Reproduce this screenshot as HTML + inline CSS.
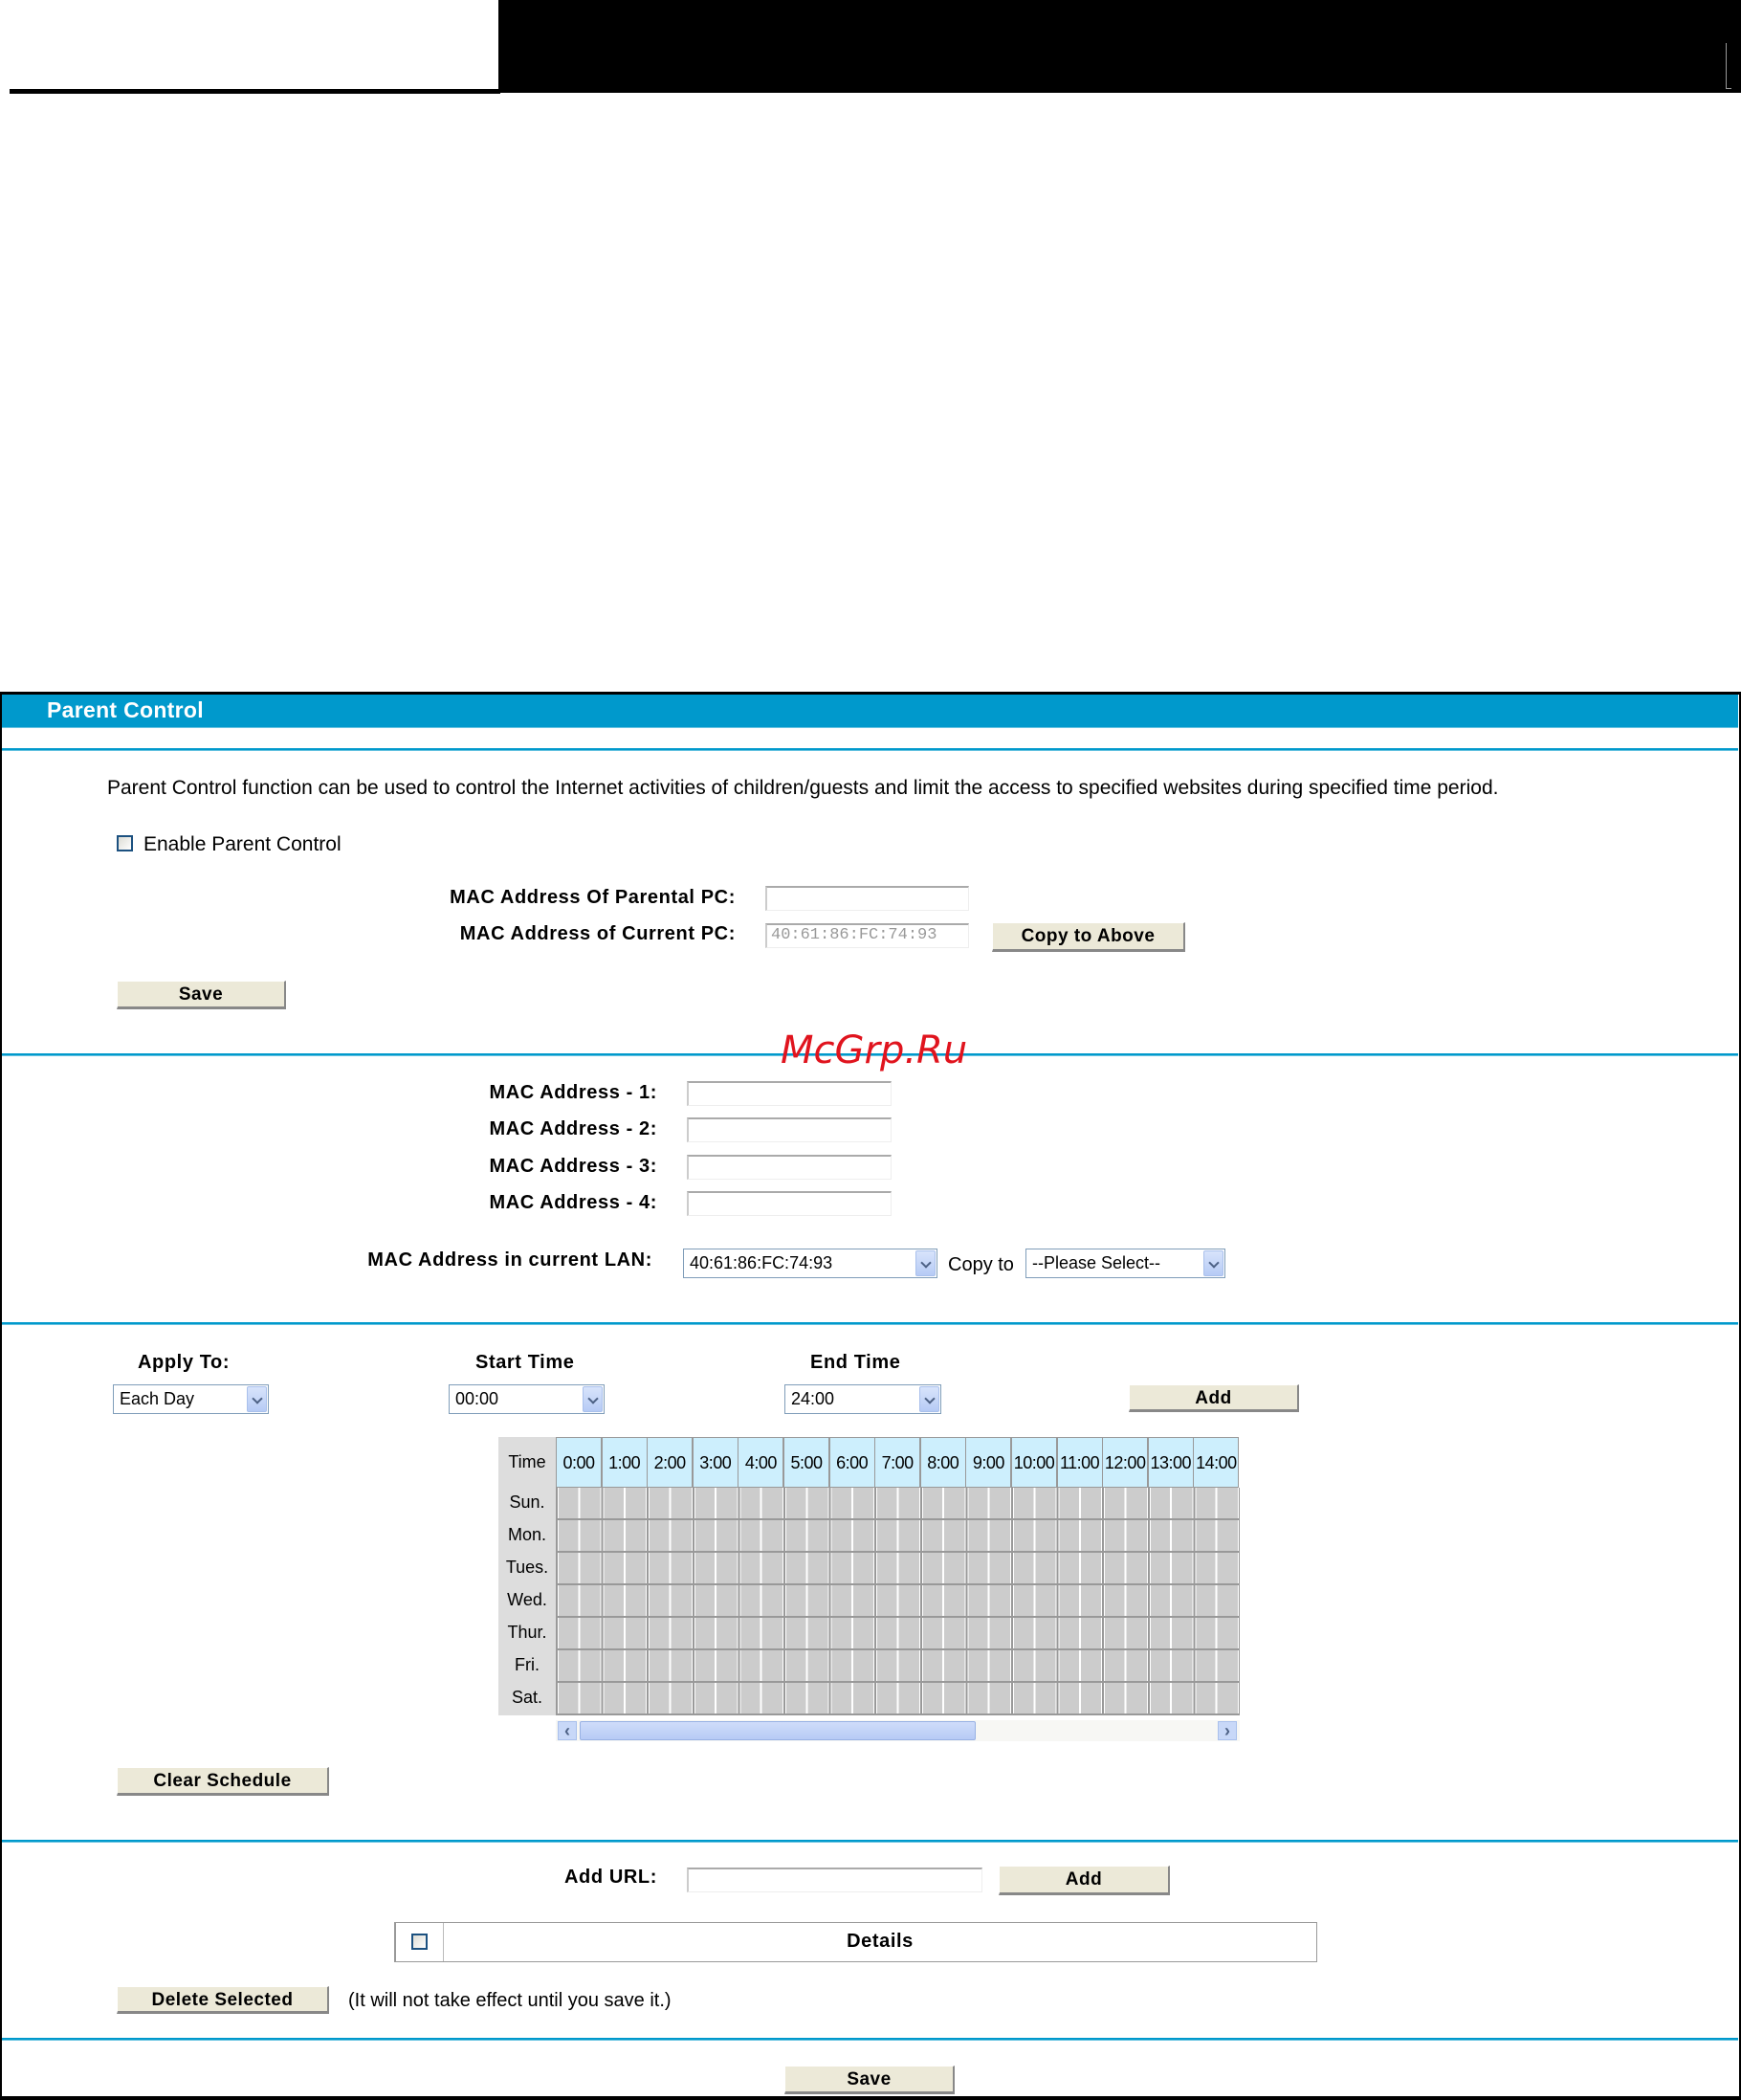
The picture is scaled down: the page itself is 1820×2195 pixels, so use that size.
<!DOCTYPE html>
<html><head><meta charset="utf-8"><style>
*{margin:0;padding:0;box-sizing:border-box}
body{width:1820px;height:2195px;position:relative;background:#fff;font-family:"Liberation Sans",Arial,sans-serif;overflow:hidden}
.a{position:absolute}
.lbl{position:absolute;font-weight:bold;font-size:20px;letter-spacing:0.6px;color:#000;text-align:right;white-space:nowrap}
.txt{position:absolute;font-size:20px;color:#000;white-space:nowrap}
.inp{position:absolute;height:26px;border-top:2px solid #aaa;border-left:2px solid #ccc;border-right:1px solid #eee;border-bottom:1px solid #eee;background:#fff}
.btn{position:absolute;background:#ece9d8;border-top:1px solid #fff;border-left:1px solid #fff;border-right:2px solid #888;border-bottom:3px solid #888;font-weight:bold;font-size:19px;letter-spacing:0.5px;text-align:center;line-height:28px;color:#000}
.sel{position:absolute;height:31px;border:1px solid #7f9db9;background:#fff;font-size:18px;line-height:29px;padding-left:6px}
.sel i{position:absolute;right:1px;top:1px;width:21px;bottom:1px;background:linear-gradient(#d8e4fb,#b6cbf5);border:1px solid #a9c0ec;border-radius:2px}
.sel i:after{content:"";position:absolute;left:6px;top:8px;width:6px;height:6px;border-right:2px solid #4d6185;border-bottom:2px solid #4d6185;transform:rotate(45deg)}
.hl{position:absolute;left:2px;width:1815px;height:3px;background:#0099cc;border-bottom:1px solid #66c2e0}
.cb{position:absolute;width:17px;height:17px;border:2px solid #1c5180;background:linear-gradient(135deg,#dcdcd5,#fff)}
.hc{position:absolute;top:0;height:53px;border:1px solid #999;background:#cdeffd;font-size:18px;line-height:53px;text-align:center;letter-spacing:-0.5px}
.day{position:absolute;left:0;width:60px;font-size:18px;text-align:center;color:#000}
</style></head><body>
<div class="a" style="left:521px;top:0;width:1299px;height:97px;background:#000"></div>
<div class="a" style="left:10px;top:93px;width:513px;height:5px;background:#000"></div>
<div class="a" style="left:1804px;top:45px;width:1px;height:48px;background:#999"></div>
<div class="a" style="left:1804px;top:92px;width:6px;height:1px;background:#999"></div>

<div class="a" style="left:0;top:723px;width:1820px;height:1472px;border:2px solid #000;border-top:3px solid #000;border-bottom:4px solid #000"></div>
<div class="a" style="left:2px;top:726px;width:1815px;height:35px;background:#0099cc;border-bottom:1px solid #66c2e0"></div>
<div class="a" style="left:49px;top:726px;color:#fff;font-weight:bold;font-size:23px;line-height:32px;letter-spacing:0.3px">Parent Control</div>
<div class="hl" style="top:782px"></div>

<div class="txt" style="left:112px;top:812px;font-size:21px">Parent Control function can be used to control the Internet activities of children/guests and limit the access to specified websites during specified time period.</div>
<div class="cb" style="left:122px;top:873px"></div>
<div class="txt" style="left:150px;top:871px;font-size:21px">Enable Parent Control</div>

<div class="lbl" style="right:1051px;top:927px">MAC Address Of Parental PC:</div>
<div class="inp" style="left:800px;top:926px;width:213px"></div>
<div class="lbl" style="right:1051px;top:965px">MAC Address of Current PC:</div>
<div class="inp" style="left:800px;top:965px;width:213px;font-family:'Liberation Mono',monospace;font-size:17px;color:#999;line-height:22px;padding-left:4px">40:61:86:FC:74:93</div>
<div class="btn" style="left:1037px;top:964px;width:202px;height:31px">Copy to Above</div>
<div class="btn" style="left:122px;top:1025px;width:177px;height:30px">Save</div>

<div class="hl" style="top:1101px"></div>
<div class="a" style="left:816px;top:1075px;color:#e0141e;font-style:italic;font-size:40px;font-family:'DejaVu Sans',sans-serif">McGrp.Ru</div>

<div class="lbl" style="right:1133px;top:1131px">MAC Address - 1:</div>
<div class="inp" style="left:718px;top:1130px;width:214px"></div>
<div class="lbl" style="right:1133px;top:1169px">MAC Address - 2:</div>
<div class="inp" style="left:718px;top:1168px;width:214px"></div>
<div class="lbl" style="right:1133px;top:1208px">MAC Address - 3:</div>
<div class="inp" style="left:718px;top:1207px;width:214px"></div>
<div class="lbl" style="right:1133px;top:1246px">MAC Address - 4:</div>
<div class="inp" style="left:718px;top:1245px;width:214px"></div>

<div class="lbl" style="right:1138px;top:1306px">MAC Address in current LAN:</div>
<div class="sel" style="left:714px;top:1305px;width:266px">40:61:86:FC:74:93<i></i></div>
<div class="txt" style="left:991px;top:1311px">Copy to</div>
<div class="sel" style="left:1072px;top:1305px;width:209px">--Please Select--<i></i></div>

<div class="hl" style="top:1382px"></div>

<div class="lbl" style="left:144px;top:1413px">Apply To:</div>
<div class="lbl" style="left:497px;top:1413px">Start Time</div>
<div class="lbl" style="left:847px;top:1413px">End Time</div>
<div class="sel" style="left:118px;top:1447px;width:163px">Each Day<i></i></div>
<div class="sel" style="left:469px;top:1447px;width:163px">00:00<i></i></div>
<div class="sel" style="left:820px;top:1447px;width:164px">24:00<i></i></div>
<div class="btn" style="left:1180px;top:1447px;width:178px;height:29px">Add</div>

<div class="a" style="left:521px;top:1502px;width:60px;height:291px;background:#ddd"></div>
<div class="day" style="left:521px;top:1518px">Time</div>
<div class="day" style="left:521px;top:1560px">Sun.</div>
<div class="day" style="left:521px;top:1594px">Mon.</div>
<div class="day" style="left:521px;top:1628px">Tues.</div>
<div class="day" style="left:521px;top:1662px">Wed.</div>
<div class="day" style="left:521px;top:1696px">Thur.</div>
<div class="day" style="left:521px;top:1730px">Fri.</div>
<div class="day" style="left:521px;top:1764px">Sat.</div>

<div class="a" style="left:581px;top:1502px;width:715px;height:53px">
<div class="hc" style="left:0;width:48px">0:00</div><div class="hc" style="left:47.6px;width:48px">1:00</div><div class="hc" style="left:95.2px;width:48px">2:00</div><div class="hc" style="left:142.8px;width:48px">3:00</div><div class="hc" style="left:190.4px;width:48px">4:00</div><div class="hc" style="left:238px;width:48px">5:00</div><div class="hc" style="left:285.6px;width:48px">6:00</div><div class="hc" style="left:333.2px;width:48px">7:00</div><div class="hc" style="left:380.8px;width:48px">8:00</div><div class="hc" style="left:428.4px;width:48px">9:00</div><div class="hc" style="left:476px;width:48px">10:00</div><div class="hc" style="left:523.6px;width:48px">11:00</div><div class="hc" style="left:571.2px;width:48px">12:00</div><div class="hc" style="left:618.8px;width:48px">13:00</div><div class="hc" style="left:666.4px;width:48px">14:00</div>
</div>
<div class="a" style="left:581px;top:1555px;width:715px;height:238px;background:repeating-linear-gradient(180deg,transparent 0 32px,#999 32px 34px),repeating-linear-gradient(90deg,#999 0 1px,#fff 1px 2px,#ccc 2px 22.3px,#fff 22.3px 24.3px,#ccc 24.3px 45.6px,#fff 45.6px 46.6px,#999 46.6px 47.6px);border-left:1px solid #999;border-right:1px solid #999;border-bottom:1px solid #999"></div>

<div class="a" style="left:581px;top:1798px;width:715px;height:22px;background:#f7f7f4"></div>
<div class="a" style="left:583px;top:1799px;width:20px;height:20px;background:#c8d8f8;border:1px solid #a9c0ec;font-size:18px;color:#4d6185;text-align:center;line-height:18px;font-weight:bold">&lsaquo;</div>
<div class="a" style="left:606px;top:1799px;width:414px;height:20px;background:linear-gradient(#cfdcfa,#b7cbf5);border:1px solid #98b1e4;border-radius:2px"></div>
<div class="a" style="left:1273px;top:1799px;width:20px;height:20px;background:#c8d8f8;border:1px solid #a9c0ec;font-size:18px;color:#4d6185;text-align:center;line-height:18px;font-weight:bold">&rsaquo;</div>

<div class="btn" style="left:122px;top:1847px;width:222px;height:30px">Clear Schedule</div>

<div class="hl" style="top:1923px"></div>

<div class="lbl" style="right:1133px;top:1951px">Add URL:</div>
<div class="inp" style="left:718px;top:1952px;width:309px"></div>
<div class="btn" style="left:1044px;top:1950px;width:179px;height:31px">Add</div>

<div class="a" style="left:412px;top:2009px;width:965px;height:42px;border:1px solid #999;border-left:2px solid #999"></div>
<div class="a" style="left:463px;top:2010px;width:1px;height:40px;background:#bbb"></div>
<div class="cb" style="left:430px;top:2021px"></div>
<div class="lbl" style="left:464px;width:912px;text-align:center;top:2018px">Details</div>

<div class="btn" style="left:122px;top:2076px;width:222px;height:29px">Delete Selected</div>
<div class="txt" style="left:364px;top:2080px">(It will not take effect until you save it.)</div>

<div class="hl" style="top:2130px"></div>
<div class="btn" style="left:820px;top:2159px;width:178px;height:30px">Save</div>
</body></html>
